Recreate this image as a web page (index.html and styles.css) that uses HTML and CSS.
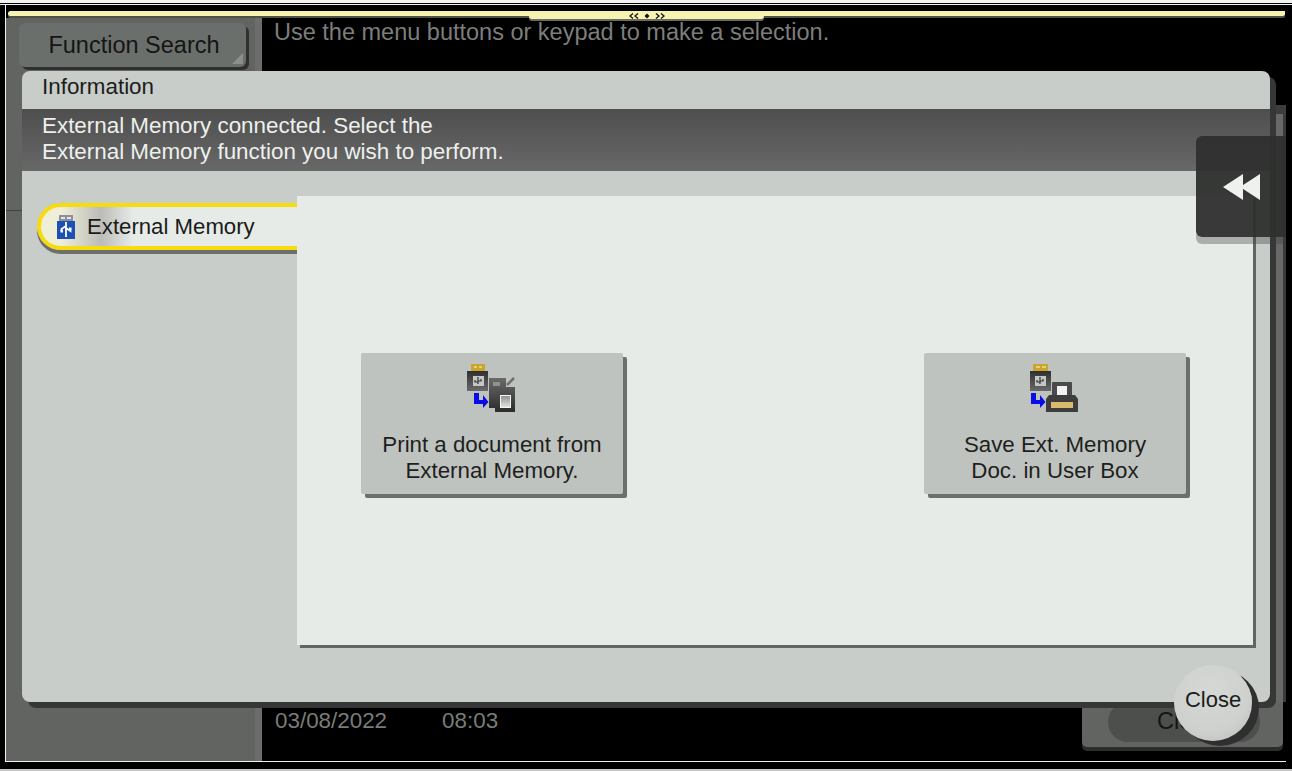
FILE: index.html
```html
<!DOCTYPE html>
<html lang="en">
<head>
<meta charset="utf-8">
<title>External Memory</title>
<link rel="stylesheet" href="styles.css">
</head>
<body>
<div class="line-top"></div>
<div class="screen">
  <div class="topbar">
    <div class="handle">
      <svg class="handle-icon" viewBox="0 0 36 6" width="36" height="6">
        <path d="M4 .5 1 3l3 2.500M9 .5 6 3l3 2.500M27 .5 30 3l-3 2.500M32 .5 35 3l-3 2.500" fill="none" stroke="#111" stroke-width="1.300"/>
        <path d="M18 .5 20.500 3 18 5.500 15.500 3z" fill="#111"/>
      </svg>
    </div>
  </div>
  <div class="under">
    <aside class="side">
      <div class="search-btn">Function Search</div>
      <div class="side-rule"></div>
    </aside>
    <main class="main">
      <p class="message">Use the menu buttons or keypad to make a selection.</p>
      <div class="rail"></div>
      <footer class="footer">
        <div class="clock"><span>03/08/2022</span><span>08:03</span></div>
        <div class="under-panel"><div class="under-pill">Close</div></div>
      </footer>
    </main>
  </div>

  <section class="modal">
    <h1 class="modal-title">Information</h1>
    <div class="notice">External Memory connected. Select the<br>External Memory function you wish to perform.</div>
    <div class="modal-body">
      <div class="tabs">
        <div class="tab">
          <svg class="tab-icon" viewBox="0 0 18 26" width="18" height="26">
            <rect x="2" y="1" width="14" height="6" fill="#8d9098"/>
            <rect x="4" y="3" width="4" height="2" fill="#e4e4e4"/>
            <rect x="10" y="3" width="4" height="2" fill="#e4e4e4"/>
            <rect x="0" y="7" width="18" height="18" fill="#1c50b4"/>
            <path d="M9 8v15M9 12 4.500 15v2M9 14l4.500 3v-2" fill="none" stroke="#fff" stroke-width="1.800"/>
            <rect x="3.500" y="16" width="2.500" height="2.500" fill="#fff"/>
            <rect x="12" y="13.500" width="2.500" height="2.500" fill="#fff"/>
          </svg>
          <span>External Memory</span>
        </div>
      </div>
      <div class="panel">
        <button class="action">
          <svg class="action-icon" viewBox="0 0 50 48" width="50" height="48">
            <defs>
              <linearGradient id="b1" x1="0" y1="0" x2="0" y2="1"><stop offset="0" stop-color="#2f2f2f"/><stop offset="1" stop-color="#6a6a6a"/></linearGradient>
              <linearGradient id="b2" x1="0" y1="0" x2="0" y2="1"><stop offset="0" stop-color="#6a6a6a"/><stop offset="1" stop-color="#2b2b2b"/></linearGradient>
              <linearGradient id="d1" x1="0" y1="0" x2="0" y2="1"><stop offset="0" stop-color="#8d8f8d"/><stop offset="1" stop-color="#e4e6e4"/></linearGradient>
            </defs>
            <rect x="5" y="0" width="14" height="7" fill="#c9a52c"/>
            <rect x="8" y="2" width="3" height="2" fill="#e3cf80"/>
            <rect x="13" y="2" width="3" height="2" fill="#e3cf80"/>
            <rect x="1" y="7" width="21" height="20" fill="url(#b1)"/>
            <rect x="7" y="12" width="11" height="10" fill="#c3c8c6"/>
            <path d="M12 13v7M9 16v2h3M15 15v2h-3" fill="none" stroke="#333" stroke-width="1.200"/>
            <path d="M8 29h5v7h4v-5l5.500 7-5.500 6v-4H8z" fill="#0b0be8"/>
            <path d="M23 14h17v9h9v25H29v-4h-6z" fill="url(#b2)"/>
            <path d="M41 21l7-7" stroke="#6e706e" stroke-width="2.500"/>
            <rect x="27" y="18" width="7" height="4" fill="#8f928f"/>
            <rect x="34.500" y="31.500" width="10" height="12" fill="url(#d1)" stroke="#f4f5f4"/>
          </svg>
          <span>Print a document from<br>External Memory.</span>
        </button>
        <button class="action">
          <svg class="action-icon" viewBox="0 0 50 48" width="50" height="48">
            <defs>
              <linearGradient id="b3" x1="0" y1="0" x2="0" y2="1"><stop offset="0" stop-color="#2f2f2f"/><stop offset="1" stop-color="#6a6a6a"/></linearGradient>
            </defs>
            <rect x="4" y="0" width="15" height="7" fill="#c9a52c"/>
            <rect x="7" y="2" width="4" height="2" fill="#e3cf80"/>
            <rect x="13" y="2" width="4" height="2" fill="#e3cf80"/>
            <rect x="1" y="7" width="21" height="20" fill="url(#b3)"/>
            <rect x="6" y="12" width="11" height="10" fill="#c3c8c6"/>
            <path d="M11 13v7M8 16v2h3M14 15v2h-3" fill="none" stroke="#333" stroke-width="1.200"/>
            <path d="M2 29h5v7h4v-5l5.500 7-5.500 6v-4H2z" fill="#0b0be8"/>
            <rect x="23" y="18" width="20" height="14" rx="1" fill="#4a4a4a"/>
            <rect x="28" y="22" width="10" height="11" fill="#f2f2f0"/>
            <path d="M20 31h26l3 4v13H17V35z" fill="#3d3d3d"/>
            <rect x="22" y="38" width="22" height="6" fill="#d9bb6d"/>
          </svg>
          <span>Save Ext. Memory<br>Doc. in User Box</span>
        </button>
      </div>
    </div>
  </section>

  <div class="flyout">
    <svg viewBox="0 0 38 28" width="38" height="28">
      <path d="M0 14 20 1v26z M17 14 37 1v26z" fill="#eef1ed"/>
    </svg>
  </div>
  <div class="close-btn">Close</div>
</div>
<div class="line-bottom"></div>
</body>
</html>
```

FILE: styles.css
```css
* { box-sizing: border-box; }
html, body { margin: 0; height: 771px; overflow: hidden; background: #000; }
body { font-family: "Liberation Sans", Arial, sans-serif; }

.line-top { height: 5px; background: #f2f2f2; border-top: 3px solid #f2f2f2; position: relative; }
.line-top::after { content: ""; display: block; height: 1px; background: #000; position: absolute; top: 0; left: 0; right: 0; }

.screen {
  position: relative;
  width: 1281px;
  height: 757px;
  margin-left: 5px;
  border-left: 1px solid #f2f2f2;
  border-bottom: 1px solid #f2f2f2;
  display: flex;
  flex-direction: column;
}
.line-bottom { height: 2px; margin-top: 7px; background: #c8c8c8; }

.topbar {
  flex: none;
  height: 5px;
  margin: 6px 1px 2px 2px;
  background: #f6f2b0;
  box-shadow: 0 2px 0 #4f5149;
  border-radius: 3px 0 3px 3px;
  display: flex;
  justify-content: center;
}
.handle {
  width: 235px;
  height: 8px;
  background: #f6f2b0;
  border-radius: 0 0 3px 3px;
  box-shadow: 0 2px 0 #6b6d62;
  display: flex;
  justify-content: center;
  padding-top: 2px;
  z-index: 1;
}
.handle-icon { flex: none; }

.under { flex: 1; display: flex; min-height: 0; }
.side {
  flex: none;
  width: 256px;
  background: #626461;
  border-right: 7px solid #6b6d6a;
  padding-top: 5px;
}
.search-btn {
  position: relative;
  width: 227px;
  height: 44px;
  margin-left: 13px;
  padding-left: 3px;
  background: #6b6f6b;
  border-radius: 6px;
  box-shadow: 3px 3px 0 #2f302f;
  color: #141514;
  font-size: 23.500px;
  line-height: 44px;
  text-align: center;
}
.search-btn::after {
  content: "";
  position: absolute;
  right: 3px;
  bottom: 3px;
  border-style: solid;
  border-width: 0 0 11px 11px;
  border-color: transparent transparent #8b8e8b transparent;
}
.side-rule { height: 1px; margin-top: 143px; width: 16px; background: #3f403f; }

.main { flex: 1; display: flex; flex-direction: column; min-width: 0; }
.message {
  flex: none;
  margin: 0;
  height: 87px;
  padding: 1px 0 0 12px;
  color: #7c7e7c;
  font-size: 23.500px;
  line-height: 26px;
}
.rail {
  flex: 1;
  align-self: flex-end;
  width: 16px;
  background: linear-gradient(90deg, #2e2e2e 0 6px, #676967 6px 13px, #3a3a3a 13px);
  border-top: 9px solid #3c3d3c;
}
.footer { flex: none; height: 59px; display: flex; justify-content: space-between; }
.clock {
  display: flex;
  gap: 55px;
  padding: 6px 0 0 13px;
  color: #7a7c7a;
  font-size: 22.400px;
  line-height: 26px;
}
.under-panel {
  width: 201px;
  height: 45px;
  margin-right: 3px;
  background: #626461;
  border-radius: 0 0 5px 5px;
  box-shadow: 0 4px 0 #2c2d2c;
  padding-left: 26px;
}
.under-pill {
  width: 152px;
  height: 40px;
  background: #4d4f4d;
  border-radius: 20px;
  color: #141514;
  font-size: 23.500px;
  line-height: 38px;
  padding-left: 49px;
}

.modal {
  position: absolute;
  left: 16px;
  top: 66px;
  width: 1248px;
  height: 631px;
  background: #c8cdc9;
  border-radius: 8px;
  box-shadow: 6px 6px 0 #363736;
  display: flex;
  flex-direction: column;
}
.modal-title {
  flex: none;
  margin: 0;
  height: 38px;
  padding-left: 20px;
  color: #1c1d1c;
  font-size: 22.400px;
  font-weight: normal;
  line-height: 32px;
}
.notice {
  flex: none;
  height: 62px;
  padding: 4px 0 0 20px;
  background: linear-gradient(#4d4e4d, #676867);
  color: #edf0ed;
  font-size: 22.400px;
  line-height: 26px;
}
.modal-body { flex: 1; display: flex; padding-top: 25px; }
.tabs { flex: none; width: 275px; padding: 7px 0 0 15px; }
.tab {
  height: 47px;
  display: flex;
  align-items: center;
  gap: 12px;
  padding: 0 0 0 16px;
  border: 4px solid #f6dc0c;
  border-right: 0;
  border-radius: 24px 0 0 24px;
  background: linear-gradient(90deg, #efefd8 0, #efefd8 20px, #bcbcb8 60px, #e6ebe7 92px);
  box-shadow: 0 4px 0 #6d6f6b;
  color: #1a1b1a;
  font-size: 22.200px;
  white-space: nowrap;
}
.tab-icon { flex: none; }
.panel {
  flex: none;
  width: 956px;
  height: 449px;
  padding: 157px 67px 0 64px;
  background: #e6ebe7;
  box-shadow: 3px 3px 0 #626661;
  display: flex;
  justify-content: space-between;
  align-items: flex-start;
}
.action {
  width: 262px;
  height: 141px;
  padding: 11px 0 0;
  border: 0;
  background: #bfc3bf;
  border-radius: 2px;
  box-shadow: 4px 4px 0 #6b706b;
  color: #1e1f1e;
  font-family: inherit;
  font-size: 22.300px;
  line-height: 26px;
  display: flex;
  flex-direction: column;
  align-items: center;
}
.action-icon { margin: 0 0 20px -3px; }

.flyout {
  position: absolute;
  left: 1190px;
  top: 131px;
  width: 90px;
  height: 101px;
  background: rgba(46, 47, 46, .95);
  border-radius: 6px 0 0 6px;
  box-shadow: 0 7px 0 rgba(60, 60, 60, .35);
  display: flex;
  align-items: center;
  padding: 0 0 0 27px;
}
.close-btn {
  position: absolute;
  left: 1168px;
  top: 660px;
  width: 78px;
  height: 76px;
  border-radius: 50%;
  background: radial-gradient(circle at 45% 35%, #d6d8d5 0, #cfd1ce 60%, #b9bbb8 100%);
  box-shadow: 7px 5px 0 #2e2f2e;
  color: #1b1c1b;
  font-size: 22px;
  line-height: 70px;
  text-align: center;
}
```
